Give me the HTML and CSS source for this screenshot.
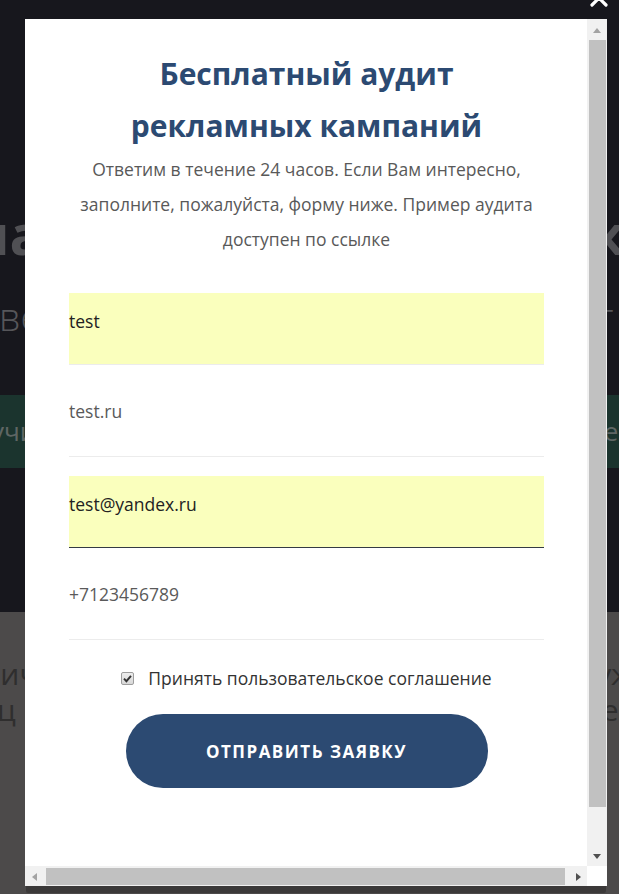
FILE: index.html
```html
<!DOCTYPE html>
<html lang="ru">
<head>
<meta charset="utf-8">
<title>Бесплатный аудит</title>
<link rel="stylesheet" href="styles.css">
</head>
<body>
<div class="page">
  <section class="hero">
    <h2 class="hero-title">Контекстная реклама на Яндекс и Google</h2>
    <p class="hero-sub">Настройка и ведение рекламы в Яндекс.Директ и Google Ads</p>
    <div class="hero-bar">Получить бесплатный аудит рекламных кампаний сейчас</div>
  </section>
  <section class="lower">
    <p class="lower-line">Мы увеличим количество заявок с вашего сайта уже через</p>
    <p class="lower-line">1 месяц работы, а стоимость заявки станет ниже — test</p>
  </section>
</div>

<div class="close" aria-label="Закрыть">
  <svg width="20" height="20" viewBox="0 0 20 20"><path d="M3 3 L17 17 M17 3 L3 17" stroke="#fff" stroke-width="3.2" stroke-linecap="round"/></svg>
</div>

<div class="modal">
  <div class="modal-body">
    <h1 class="title">Бесплатный аудит<br>рекламных кампаний</h1>
    <p class="lead">Ответим в течение 24 часов. Если Вам интересно, заполните, пожалуйста, форму ниже. Пример аудита доступен по ссылке</p>
    <form class="form">
      <div class="field filled">test</div>
      <div class="field">test.ru</div>
      <div class="field filled active">test@yandex.ru</div>
      <div class="field">+7123456789</div>
      <label class="agree">
        <span class="check"><svg width="13" height="13" viewBox="0 0 13 13"><path d="M3 6.6 L5.4 9.2 L10 3.8" fill="none" stroke="#333" stroke-width="1.9"/></svg></span>
        <span>Принять пользовательское соглашение</span>
      </label>
      <button type="button" class="submit">ОТПРАВИТЬ ЗАЯВКУ</button>
    </form>
  </div>
  <div class="vscroll">
    <div class="sbtn"><span class="tri up"></span></div>
    <div class="vthumb"></div>
    <div class="vspace"></div>
    <div class="sbtn"><span class="tri down"></span></div>
  </div>
  <div class="hscroll">
    <div class="sbtn"><span class="tri left"></span></div>
    <div class="hthumb"></div>
    <div class="hspace"></div>
    <div class="sbtn"><span class="tri right"></span></div>
  </div>
  <div class="corner"></div>
</div>
</body>
</html>
```

FILE: styles.css
```css
* { box-sizing: border-box; }
html, body { margin: 0; padding: 0; }
body {
  width: 619px;
  height: 894px;
  overflow: hidden;
  position: relative;
  font-family: "Open Sans", "Noto Sans", sans-serif;
  background: #4c4a4a;
}

/* background page */
.page { width: 619px; }
.hero {
  height: 612px;
  background: #17171d;
  padding-top: 198px;
  overflow: hidden;
}
.hero-title {
  margin: 0;
  height: 70px;
  font-size: 56px;
  line-height: 70px;
  font-weight: 700;
  color: #505054;
  white-space: nowrap;
  text-align: center;
  display: flex;
  justify-content: center;
}
.hero-sub {
  margin: 22px 0 0;
  height: 52px;
  font-size: 38px;
  line-height: 52px;
  font-weight: 300;
  color: #56565a;
  white-space: nowrap;
  display: flex;
  justify-content: center;
}
.hero-bar {
  margin-top: 53px;
  height: 73px;
  background: #1b342e;
  color: #5f6664;
  font-size: 26px;
  line-height: 73px;
  white-space: nowrap;
  display: flex;
  justify-content: center;
}
.lower {
  height: 282px;
  background: #4c4a4a;
  padding-top: 44px;
  overflow: hidden;
}
.lower-line {
  margin: 0;
  font-size: 30px;
  line-height: 36px;
  color: #2f2e2e;
  white-space: nowrap;
  display: flex;
  justify-content: center;
}

/* close icon (overlay) */
.close {
  position: absolute;
  left: 589px;
  top: -12px;
  width: 20px;
  height: 20px;
}
.close svg { display: block; }

/* modal (overlay) */
.modal {
  position: absolute;
  left: 25px;
  top: 19px;
  width: 582px;
  height: 867px;
  display: grid;
  grid-template-columns: 562px 20px;
  grid-template-rows: 847px 20px;
  background: #fff;
  box-shadow: 0 8px 0 -1px rgba(0, 0, 0, 0.22);
  border-radius: 0 0 3px 3px;
}
.modal-body {
  padding: 29px 43px 0 44px;
  overflow: hidden;
}
.title {
  margin: 0;
  text-align: center;
  font-size: 30px;
  line-height: 52px;
  font-weight: 700;
  color: #2c4a72;
}
.lead {
  margin: 0;
  text-align: center;
  font-size: 17.5px;
  line-height: 35px;
  color: #595959;
}
.form {
  margin-top: 36px;
  display: flex;
  flex-direction: column;
}
.field {
  height: 72px;
  padding-top: 14px;
  font-size: 17.5px;
  line-height: 24px;
  color: #5a5a5a;
  border-bottom: 1px solid #ececec;
  margin-bottom: 19.5px;
}
.field.filled {
  background: #faffbd;
  color: #222;
  padding-top: 16px;
}
.field.active { border-bottom-color: #333a44; }
.agree {
  margin-top: 7px;
  display: flex;
  align-items: center;
  justify-content: center;
  gap: 14px;
  font-size: 17.5px;
  line-height: 24px;
  color: #333;
}
.check {
  width: 13px;
  height: 13px;
  border: 1px solid #9d9d9d;
  border-radius: 2px;
  background: linear-gradient(#ededed, #d8d8d8);
  display: flex;
}
.check svg { display: block; margin: -1px; }
.submit {
  margin: 24px auto 0;
  width: 362px;
  height: 74px;
  border: 0;
  border-radius: 37px;
  background: #2c4a72;
  color: #fff;
  font-family: "Open Sans", "Noto Sans", sans-serif;
  font-size: 17px;
  font-weight: 700;
  letter-spacing: 1.5px;
}

/* scrollbars */
.vscroll {
  background: #f1f1f1;
  display: flex;
  flex-direction: column;
}
.hscroll {
  background: #f1f1f1;
  display: flex;
}
.corner { background: #fff; }
.sbtn {
  width: 21px;
  height: 21px;
  display: flex;
  align-items: center;
  justify-content: center;
  flex: none;
}
.vscroll .sbtn { width: 20px; }
.hscroll .sbtn { height: 20px; }
.vthumb {
  height: 767px;
  width: 17px;
  margin-left: 2px;
  background: #c1c1c1;
  flex: none;
}
.vspace { flex: 1; }
.hthumb {
  width: 519px;
  height: 17px;
  margin-top: 2px;
  background: #c1c1c1;
  flex: none;
}
.hspace { flex: 1; }
.tri { width: 0; height: 0; border-style: solid; }
.tri.up { border-width: 0 4.5px 5px; border-color: transparent transparent #a3a3a3; margin-top: 1px; }
.tri.down { border-width: 5px 4.5px 0; border-color: #505050 transparent transparent; margin-top: 2px; }
.tri.left { border-width: 4.5px 5px 4.5px 0; border-color: transparent #a3a3a3 transparent transparent; margin-left: -2px; margin-top: 2px; }
.tri.right { border-width: 4.5px 0 4.5px 5px; border-color: transparent transparent transparent #505050; margin-left: 4px; margin-top: 2px; }
```
